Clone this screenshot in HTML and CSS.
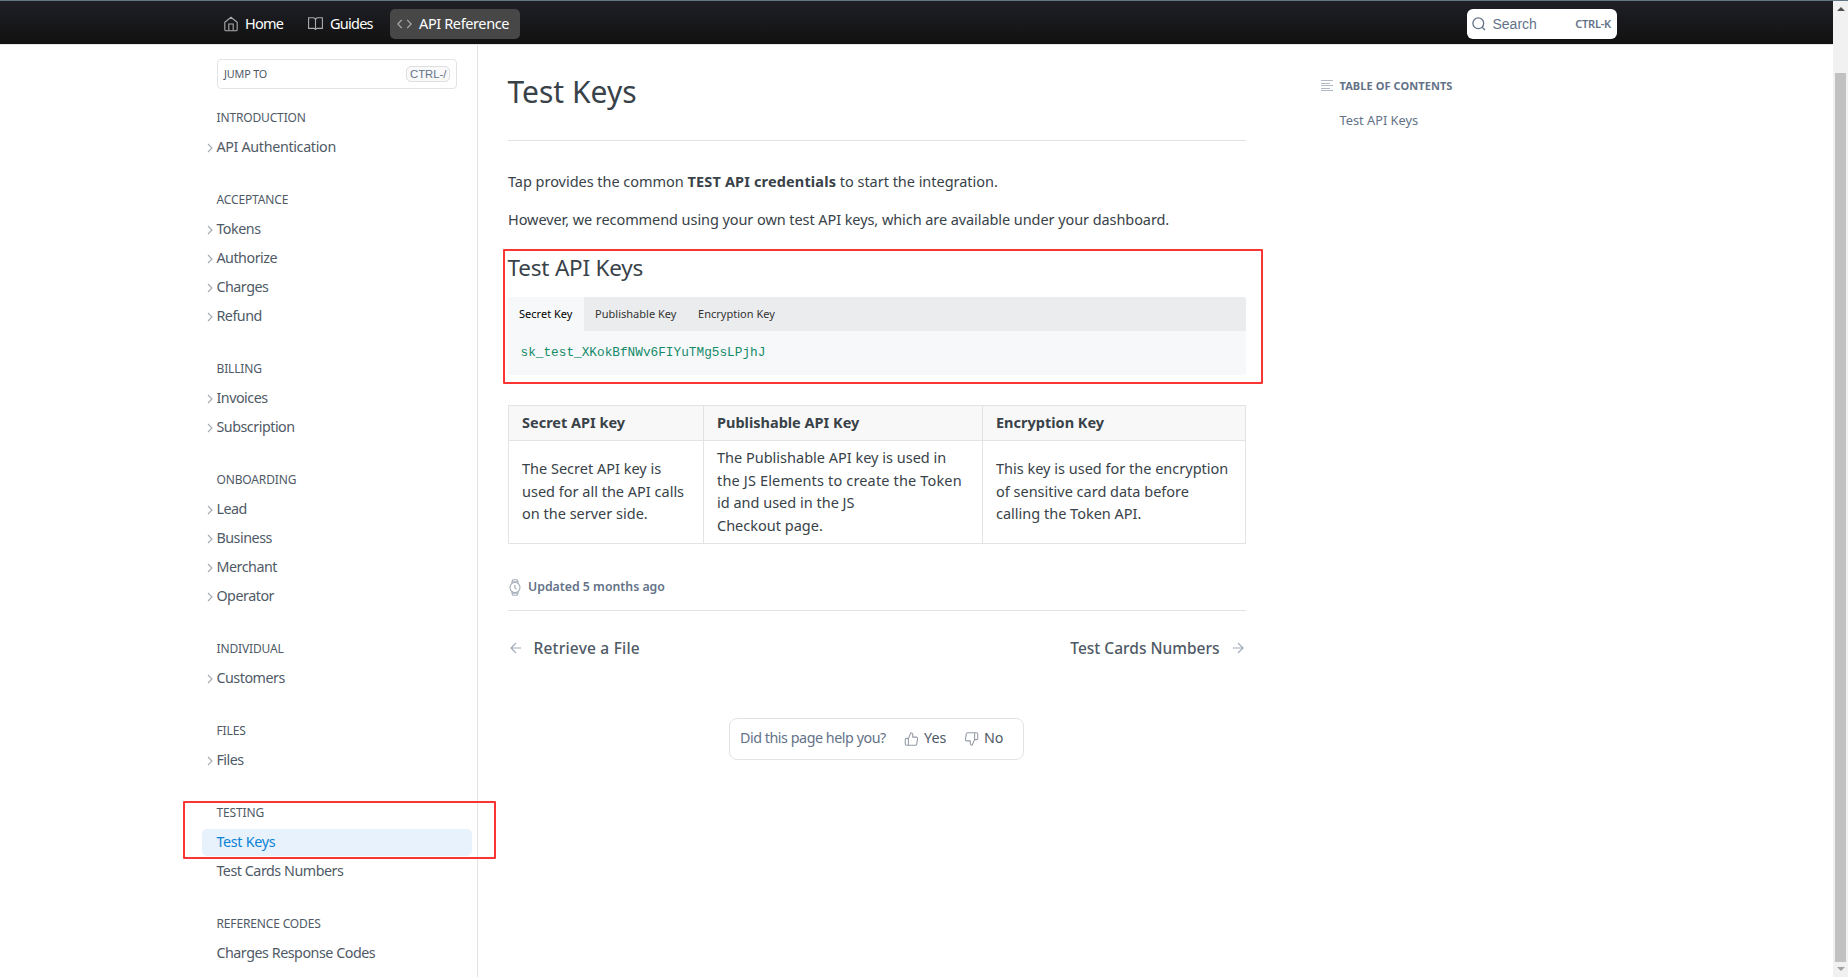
FILE: index.html
```html
<!DOCTYPE html>
<html lang="en">
<head>
<meta charset="utf-8">
<title>Test Keys</title>
<link rel="stylesheet" href="styles.css">
</head>
<body>
<svg class="defs" width="0" height="0">
  <symbol id="chev" viewBox="0 0 6 10"><path d="M1 1l4 4-4 4" fill="none" stroke="currentColor" stroke-width="1.1"/></symbol>
  <symbol id="thumb" viewBox="0 0 24 24"><path d="M14 9V5a3 3 0 0 0-3-3l-4 9v11h11.3a2 2 0 0 0 2-1.7l1.4-9a2 2 0 0 0-2-2.3zM7 22H4a2 2 0 0 1-2-2v-7a2 2 0 0 1 2-2h3" fill="none" stroke="currentColor" stroke-width="1.7" stroke-linejoin="round"/></symbol>
</svg>
<div class="app">
<div class="page">
  <header class="header">
    <nav class="topnav">
      <a class="nav-home"><svg width="14" height="16" viewBox="0 0 14 16" fill="none" stroke="currentColor" stroke-width="1.1"><path d="M.8 6.2L7 1.2l6.2 5v7.3a1.2 1.2 0 0 1-1.2 1.2H2a1.2 1.2 0 0 1-1.2-1.2z"/><path d="M4.8 14.6V8h4.4v6.6"/></svg><span>Home</span></a>
      <a class="nav-guides"><svg width="15" height="14" viewBox="0 0 15 14" fill="none" stroke="currentColor" stroke-width="1.1"><path d="M7.5 3v10M.6.8h4.6a2.3 2.3 0 0 1 2.3 2.2A2.3 2.3 0 0 1 9.8.8h4.6v10.6H9.2A1.7 1.7 0 0 0 7.5 13a1.7 1.7 0 0 0-1.7-1.6H.6z"/></svg><span>Guides</span></a>
      <a class="nav-ref"><svg width="15" height="10" viewBox="0 0 15 10" fill="none" stroke="currentColor" stroke-width="1.2"><path d="M4.8.8L.8 5l4 4.2M10.2.8l4 4.2-4 4.2"/></svg><span>API Reference</span></a>
    </nav>
    <div class="search"><svg width="14" height="14" viewBox="0 0 14 14" fill="none" stroke="currentColor" stroke-width="1.3"><circle cx="6.3" cy="6.3" r="5.4"/><path d="M10.2 10.2l2.8 2.8"/></svg><span class="search-label">Search</span><span class="search-key">CTRL-K</span></div>
  </header>
  <div class="body">
    <aside class="sidebar">
      <div class="jump"><span>JUMP TO</span><kbd>CTRL-/</kbd></div>
      <section><h3>INTRODUCTION</h3><a class="wide"><svg><use href="#chev"/></svg>API Authentication</a></section>
      <section><h3>ACCEPTANCE</h3><a><svg><use href="#chev"/></svg>Tokens</a><a><svg><use href="#chev"/></svg>Authorize</a><a><svg><use href="#chev"/></svg>Charges</a><a><svg><use href="#chev"/></svg>Refund</a></section>
      <section><h3>BILLING</h3><a><svg><use href="#chev"/></svg>Invoices</a><a><svg><use href="#chev"/></svg>Subscription</a></section>
      <section><h3>ONBOARDING</h3><a><svg><use href="#chev"/></svg>Lead</a><a><svg><use href="#chev"/></svg>Business</a><a><svg><use href="#chev"/></svg>Merchant</a><a><svg><use href="#chev"/></svg>Operator</a></section>
      <section><h3>INDIVIDUAL</h3><a><svg><use href="#chev"/></svg>Customers</a></section>
      <section><h3>FILES</h3><a><svg><use href="#chev"/></svg>Files</a></section>
      <section><h3>TESTING</h3><a class="active">Test Keys</a><a>Test Cards Numbers</a></section>
      <section><h3>REFERENCE CODES</h3><a>Charges Response Codes</a></section>
    </aside>
    <main class="main">
      <h1>Test Keys</h1>
      <p class="p1">Tap provides the common <b>TEST API credentials</b> to start the integration.</p>
      <p class="p2">However, we recommend using your own test API keys, which are available under your dashboard.</p>
      <h2>Test API Keys</h2>
      <div class="code">
        <div class="tabs"><span class="tab on">Secret Key</span><span class="tab">Publishable Key</span><span class="tab">Encryption Key</span></div>
        <pre>sk_test_XKokBfNWv6FIYuTMg5sLPjhJ</pre>
      </div>
      <table>
        <colgroup><col class="c1"><col class="c2"><col class="c3"></colgroup>
        <tr><th>Secret API key</th><th>Publishable API Key</th><th>Encryption Key</th></tr>
        <tr><td>The Secret API key is<br>used for all the API calls<br>on the server side.</td><td>The Publishable API key is used in<br><span class="loose">the JS Elements to create the Token</span><br>id and used in the JS<br>Checkout page.</td><td>This key is used for the encryption<br>of sensitive card data before<br>calling the Token API.</td></tr>
      </table>
      <div class="updated"><svg width="12" height="17" viewBox="0 0 12 17" fill="none" stroke="currentColor" stroke-width="1.1"><circle cx="6" cy="8.5" r="5"/><path d="M2.7 4.6L3.3 1.6a1 1 0 0 1 1-.8h3.4a1 1 0 0 1 1 .8l.6 3M2.7 12.4l.6 3a1 1 0 0 0 1 .8h3.4a1 1 0 0 0 1-.8l.6-3M3.2 2.8h5.6M3.2 14.2h5.6M5.8 6v2.8l1.8 1.2"/></svg><span>Updated 5 months ago</span></div>
      <div class="pager">
        <a class="prev"><svg width="12" height="12" viewBox="0 0 12 12" fill="none" stroke="currentColor" stroke-width="1.2"><path d="M11.2 6H1M6 1L1 6l5 5"/></svg><span>Retrieve a File</span></a>
        <a class="next"><span>Test Cards Numbers</span><svg width="12" height="12" viewBox="0 0 12 12" fill="none" stroke="currentColor" stroke-width="1.2"><path d="M.8 6H11M6 1l5 5-5 5"/></svg></a>
      </div>
      <div class="help"><span class="q">Did this page help you?</span><svg class="up"><use href="#thumb"/></svg><span class="yes">Yes</span><svg class="down"><use href="#thumb"/></svg><span class="no">No</span></div>
      <div class="mark mark-keys"></div>
    </main>
    <aside class="toc">
      <div class="toc-head"><svg width="13" height="12" viewBox="0 0 13 12" stroke="currentColor"><path d="M0 .5h12M0 3.5h9M0 5.5h12M0 8.5h9M0 10.5h12"/></svg><span>TABLE OF CONTENTS</span></div>
      <a>Test API Keys</a>
    </aside>
  </div>
  <div class="mark mark-side"></div>
</div>
<div class="scroll"><i class="tri-up"></i><div class="thumb"></div><i class="tri-down"></i></div>
</div>
</body>
</html>
```
FILE: styles.css
```css
* { box-sizing: border-box; }
body { margin: 0; background: #fff; color: #384248; font: 14.5px/22.5px "Noto Sans", sans-serif; overflow: hidden; }
h1, h2, h3, p, pre { margin: 0; font-weight: 400; }
svg { display: block; flex: none; }
.defs { position: absolute; }
.app { display: flex; height: 977px; border-top: 1px solid #647883; overflow: hidden; white-space: nowrap; }
.page { position: relative; width: 1833px; }
.header { display: flex; height: 43px; background: linear-gradient(#1f2026, #111); padding-left: 224px; align-items: flex-start; color: #fff; font-size: 14.5px; }
.topnav { display: flex; width: 1243px; padding-top: 8px; }
.topnav a { display: flex; align-items: center; height: 30px; }
.topnav span { padding-bottom: 1px; }
.topnav svg { color: #aaabad; }
.nav-home { width: 84px; gap: 7px; letter-spacing: -.8px; }
.nav-guides { width: 82px; gap: 7px; letter-spacing: -.75px; }
.nav-ref { width: 130px; gap: 7px; padding-left: 7px; border-radius: 5px; background: #474747; letter-spacing: -.38px; }
.search { display: flex; align-items: center; width: 150px; height: 30px; margin-top: 8px; padding: 0 6px 0 5px; border-radius: 6px; background: #fff; color: #637288; }
.search-label { margin-left: 6.5px; font: 14px "Liberation Sans", sans-serif; letter-spacing: 0; }
.search-key { margin-left: auto; font-size: 11px; font-weight: 600; letter-spacing: -.2px; }
.body { display: flex; height: 933px; border-top: 1px solid #e3e4e6; }
.sidebar { width: 478px; height: 933px; border-right: 1px solid #e1e3e5; padding: 14px 5px 0 202px; color: #4f5a66; overflow: hidden; }
.jump { display: flex; align-items: center; justify-content: space-between; width: 240px; height: 30px; margin: 0 0 15px 15px; padding: 0 6px; border: 1px solid #e2e3e5; border-radius: 4px; font-size: 10.8px; letter-spacing: -.15px; }
.jump kbd { display: flex; align-items: center; width: 44px; height: 16px; padding-left: 3px; border: 1px solid #dddee0; border-radius: 5px; background: #f9f9fa; color: #637288; font: 11.3px "Liberation Sans", sans-serif; letter-spacing: 0; }
.sidebar section { margin-bottom: 25px; }
.sidebar h3 { height: 30px; padding-left: 14.5px; font-size: 12px; line-height: 27px; letter-spacing: -.15px; }
.sidebar a { display: flex; align-items: center; position: relative; height: 27px; margin-bottom: 2px; padding-left: 14.4px; border-radius: 5px; font-size: 14.3px; letter-spacing: -.47px; }
.sidebar .wide { letter-spacing: -.32px; }
.sidebar a svg { position: absolute; left: 5px; top: 9px; width: 6px; height: 10px; color: #a5abb3; }
.sidebar .active { background: #e7f2fc; color: #0a82d6; letter-spacing: -.3px; }
.main { position: relative; width: 738px; margin-left: 30px; }
.main h1 { height: 96px; padding-top: 26px; border-bottom: 1px solid #e1e3e5; font-size: 30px; line-height: 42px; letter-spacing: 0; text-indent: -.5px; }
.p1 { margin-top: 29px; letter-spacing: -.03px; }
.p1 b { letter-spacing: .15px; }
.p2 { margin-top: 15px; letter-spacing: -.075px; }
.main h2 { margin-top: 20px; font-size: 22.5px; line-height: 36px; letter-spacing: -.2px; text-indent: -.5px; }
.code { margin-top: 11px; height: 78px; border-radius: 3px; background: #f6f8fa; overflow: hidden; }
.tabs { display: flex; height: 34px; background: #ebecee; font-size: 11px; line-height: 34px; color: #333; letter-spacing: .02px; }
.tab:nth-child(1) { width: 76px; padding-left: 11px; }
.tab:nth-child(2) { width: 103px; padding-left: 11px; }
.tab:nth-child(3) { padding-left: 11px; }
.tab.on { background: #f6f8fa; color: #000; }
.code pre { padding: 11px 12.5px; color: #148a69; font: 12.75px/22px "Liberation Mono", monospace; }
table { width: 738px; margin-top: 30px; border-collapse: collapse; table-layout: fixed; }
.c1 { width: 195px; } .c2 { width: 279px; } .c3 { width: 263px; }
th, td { border: 1px solid #e1e3e5; text-align: left; padding: 5px 13px 7px; }
th { background: #f8f8f8; height: 35px; padding: 4px 13px 6px; }
td { height: 103px; }
.loose { letter-spacing: .16px; }
.updated { display: flex; align-items: center; gap: 7px; height: 67px; padding: 20px 0 0 1px; border-bottom: 1px solid #e1e3e5; color: #637288; font-size: 12.3px; font-weight: 600; }
.updated svg, .pager svg { color: #a4adbb; }
.pager { display: flex; justify-content: space-between; padding: 26px 2px 0; font-size: 15.5px; font-weight: 500; color: #4f5a66; }
.pager a { display: flex; align-items: center; gap: 12.5px; }
.pager .prev { gap: 11.5px; letter-spacing: .2px; }
.help { display: flex; align-items: center; width: 295px; height: 42px; margin: 58px 0 0 221px; padding-left: 10px; border: 1px solid #e1e3e5; border-radius: 8px; color: #637288; font-size: 14.3px; }
.help svg { width: 15px; height: 16px; color: #939ba5; }
.q { width: 164px; letter-spacing: -.46px; } .yes { width: 40px; margin-left: 5px; color: #4f5a66; } .no { margin-left: 5px; color: #4f5a66; }
.down { transform: rotate(180deg); }
.toc { margin-left: 75px; padding-top: 30px; color: #637288; }
.toc-head { display: flex; align-items: center; gap: 5.5px; font-size: 11px; font-weight: 700; letter-spacing: .08px; }
.toc-head svg { color: #b1b9c5; }
.toc a { display: block; margin: 11px 0 0 18.5px; font-size: 12.8px; }
.mark { position: absolute; border: 2px solid #fb3434; border-radius: 1px; }
.mark-keys { left: -5px; top: 204px; width: 760px; height: 135px; }
.mark-side { left: 183px; top: 800px; width: 313px; height: 58px; }
.scroll { display: flex; flex-direction: column; align-items: center; width: 15px; background: #f1f1f1; }
.thumb { width: 11px; height: 889px; margin-top: 62px; background: #c1c1c1; }
.tri-up, .tri-down { border: 4px solid transparent; height: 0; }
.tri-up { margin-top: 2px; border-bottom-color: #505050; }
.tri-down { margin-top: 5px; border-top-color: #a3a3a3; }
```
